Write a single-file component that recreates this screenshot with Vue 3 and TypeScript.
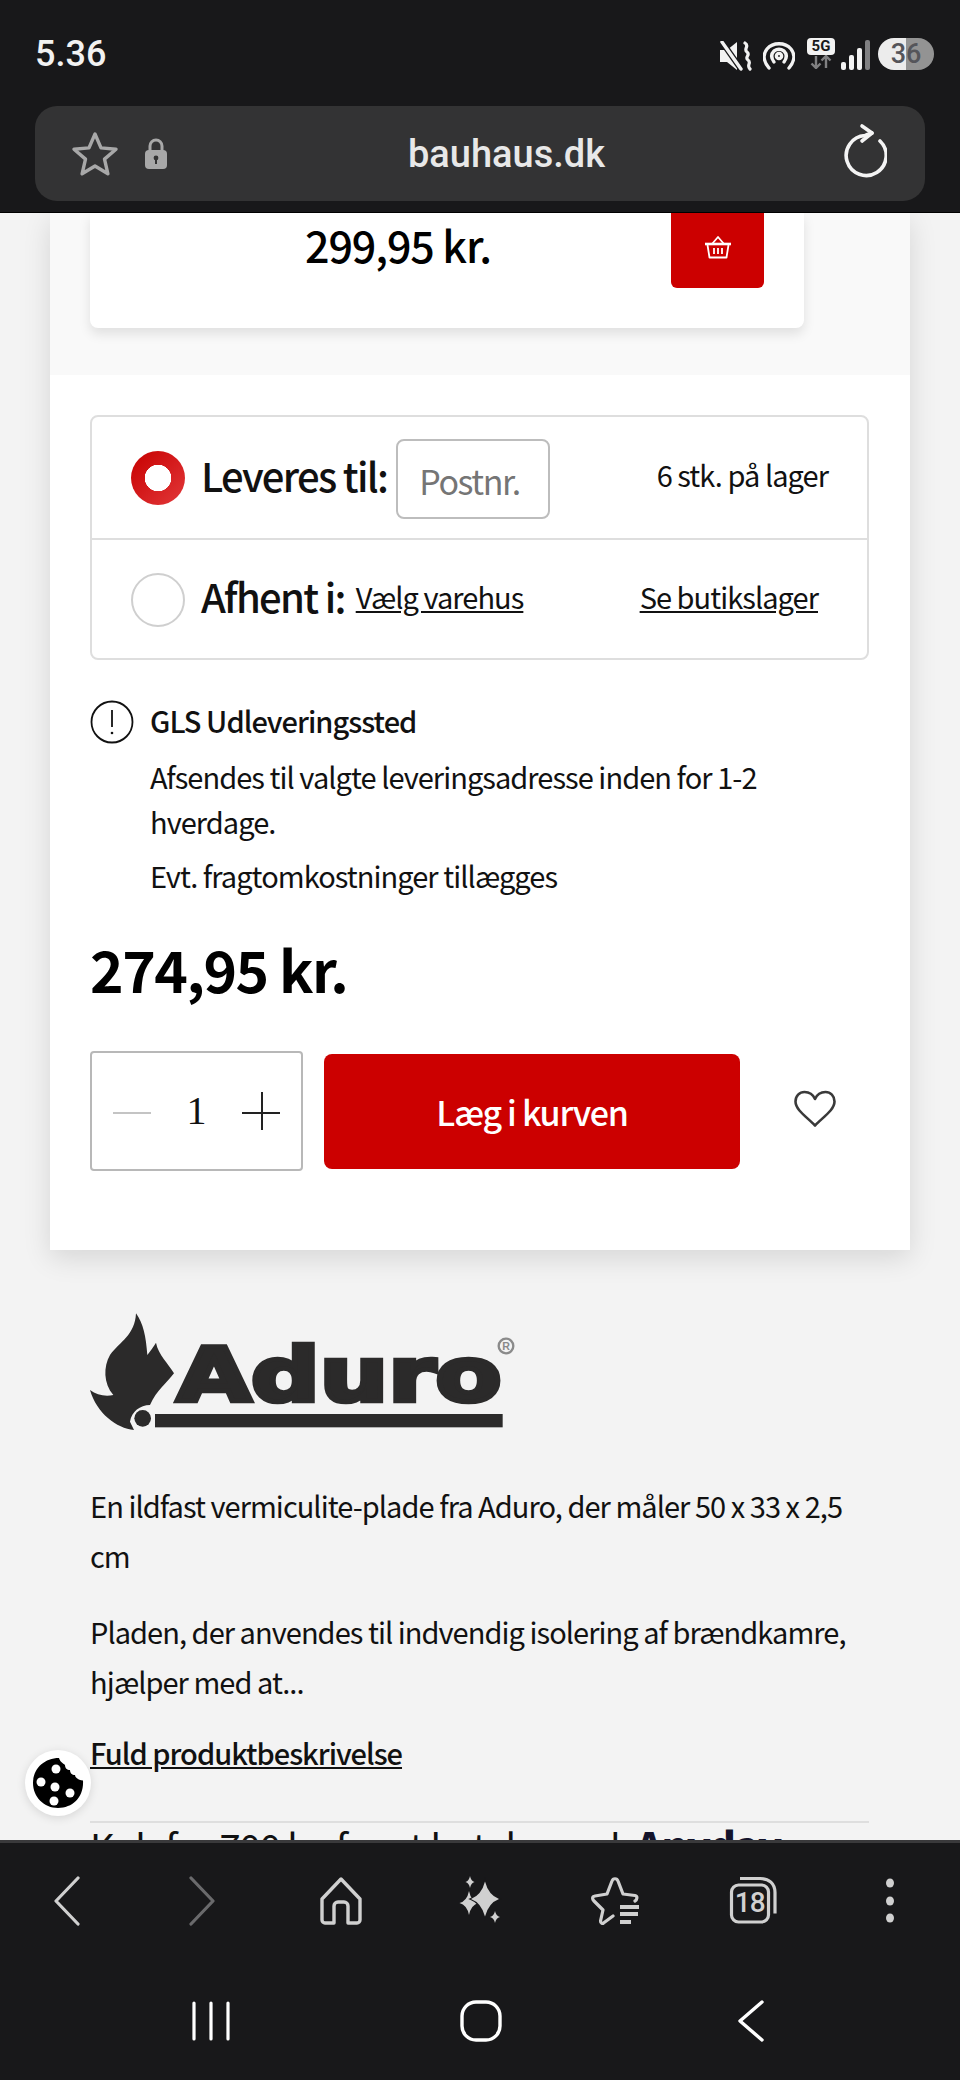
<script setup lang="ts">
const navDim = '#6a6a6c';
</script>

<template>
  <div class="phone">
    <header class="top">
      <div class="status">
        <span class="time">5.36</span>
        <div class="status-icons">
          <svg class="i-mute" width="32" height="30" viewBox="0 0 32 30">
            <path d="M0 9h7l10-8v28L7 21H0z" fill="#f2f2f2" />
            <path d="M2 1l19 27" stroke="#18181a" stroke-width="6" />
            <path d="M2 1l19 27" stroke="#f2f2f2" stroke-width="3.400" stroke-linecap="round" />
            <path d="M25 2c5 3-2 6 2 9s-3 5 1 8-2 5 2 9" fill="none" stroke="#f2f2f2" stroke-width="3.200" stroke-linecap="round" />
          </svg>
          <svg class="i-hot" width="32" height="30" viewBox="0 0 32 30" fill="none" stroke="#f2f2f2" stroke-width="3.400" stroke-linecap="round">
            <path d="M6 27C0 20 0 13 4 8c6-7 18-7 24 0 4 5 4 12-2 19" />
            <path d="M11 21c-3-4-3-8 0-11 3-2 7-2 10 0 3 3 3 7 0 11" />
            <circle cx="16" cy="15" r="2.600" />
          </svg>
          <div class="net">
            <span class="net-5g">5G</span>
            <svg width="22" height="14" viewBox="0 0 22 14" fill="none" stroke="#808082" stroke-width="2.400">
              <path d="M6 1v12M1.500 8.500 6 13l4.500-4.500" />
              <path d="M16 13V1M11.500 5.500 16 1l4.500 4.500" />
            </svg>
          </div>
          <div class="signal">
            <span class="bar b1"></span>
            <span class="bar b2"></span>
            <span class="bar b3"></span>
            <span class="bar b4"></span>
          </div>
          <div class="battery"><span>36</span></div>
        </div>
      </div>
      <div class="address">
        <svg class="addr-star" width="48" height="48" viewBox="0 0 48 48">
          <path d="M24 4l6 13.900 15 1.300-11.500 9.900 3.400 14.700L24 36l-12.900 7.800 3.400-14.700L3 19.200l15-1.300z" fill="none" stroke="#a8a8a8" stroke-width="3.400" stroke-linejoin="round" />
        </svg>
        <svg class="addr-lock" width="24" height="31" viewBox="0 0 24 31">
          <path d="M6 13V8a6 6 0 0 1 12 0v5" fill="none" stroke="#a8a8a8" stroke-width="3" />
          <rect x="1" y="12" width="22" height="19" rx="4" fill="#a8a8a8" />
          <circle cx="12" cy="20" r="2.400" fill="#333" />
          <rect x="11" y="20" width="2" height="6" fill="#333" />
        </svg>
        <span class="domain">bauhaus.dk</span>
        <svg class="addr-reload" width="46" height="56" viewBox="0 0 46 56" fill="none" stroke="#f4f4f4" stroke-width="3.600" stroke-linecap="round" stroke-linejoin="round">
          <path d="M39 18A20 20 0 1 1 24 12.500C26 11.500 28 11 31 10" />
          <path d="M21 3l10 7-10 8" />
        </svg>
      </div>
    </header>

    <main class="page">
      <section class="card">
        <div class="upsell">
          <div class="upsell-card">
            <span class="upsell-price">299,95 kr.</span>
            <button class="basket-btn">
              <svg width="28" height="23" viewBox="0 0 28 23" fill="none" stroke="#fff" stroke-width="1.800" stroke-linejoin="round">
                <path d="M8 8l6-7 6 7" />
                <path d="M1 8h26" stroke-width="2.600" />
                <path d="M3.500 9l2 12.500h17L24.500 9" />
                <path d="M10 12v6M14 12v6M18 12v6" />
              </svg>
            </button>
          </div>
        </div>

        <div class="buy">
          <div class="delivery">
            <div class="delivery-row first">
              <span class="radio on"></span>
              <span class="del-label">Leveres til:</span>
              <span class="zip">Postnr.</span>
              <span class="stock">6 stk. på lager</span>
            </div>
            <div class="delivery-row">
              <span class="radio"></span>
              <span class="del-label second">Afhent i:</span>
              <a class="pick">Vælg varehus</a>
              <a class="store">Se butikslager</a>
            </div>
          </div>

          <div class="info">
            <div class="info-head">
              <span class="info-mark">
                <svg width="44" height="44" viewBox="0 0 44 44" fill="none" stroke="#111" stroke-width="1.800">
                  <circle cx="22" cy="22" r="20.500" />
                  <path d="M22 10v17" />
                  <circle cx="22" cy="33" r="1.300" fill="#111" stroke="none" />
                </svg>
              </span>
              <strong>GLS Udleveringssted</strong>
            </div>
            <p class="info-text">Afsendes til valgte leveringsadresse inden for 1-2 hverdage.</p>
            <p class="info-text last">Evt. fragtomkostninger tillægges</p>
          </div>

          <div class="price">274,95 kr.</div>

          <div class="actions">
            <div class="qty">
              <span class="qty-minus"></span>
              <span class="qty-num">1</span>
              <span class="qty-plus"></span>
            </div>
            <button class="add">Læg i kurven</button>
            <svg class="heart" width="44" height="38" viewBox="0 0 44 38">
              <path d="M22 35.500C14 27 2.500 20 2.500 11.500 2.500 6 6.500 2 11.500 2c4.500 0 8.500 2.500 10.500 7 2-4.500 6-7 10.500-7 5 0 9 4 9 9.500C41.500 20 30 27 22 35.500z" fill="none" stroke="#3a3a3a" stroke-width="2.600" stroke-linejoin="round" />
            </svg>
          </div>
        </div>
      </section>

      <section class="desc">
        <svg class="logo" width="430" height="124" viewBox="90 90 1290 372">
          <path d="M228 100C250 130 258 170 262 225 270 215 280 200 288 188 295 225 325 250 342 280 320 310 290 330 270 375 240 375 215 395 210 425L222 450C170 445 110 400 90 330 110 345 135 350 160 345 130 310 130 260 150 225 180 185 225 165 228 100Z" fill="#2b2a2a" />
          <circle cx="248" cy="415" r="25" fill="#2b2a2a" />
          <rect x="285" y="402" width="1043" height="40" fill="#2b2a2a" />
          <text x="350" y="364" class="logo-word" textLength="975" lengthAdjust="spacingAndGlyphs">Aduro</text>
          <circle cx="1338" cy="198" r="22" fill="none" stroke="#8a8a8a" stroke-width="7" />
          <text x="1338" y="210" class="logo-r" text-anchor="middle">R</text>
        </svg>
        <p class="desc-text">En ildfast vermiculite-plade fra Aduro, der måler 50 x 33 x 2,5 cm</p>
        <p class="desc-text">Pladen, der anvendes til indvendig isolering af brændkamre, hjælper med at...</p>
        <a class="full">Fuld produktbeskrivelse</a>
        <div class="anyday">
          <span>Køb for 700 kr. for at betale med</span>
          <b>Anyday</b>
        </div>
      </section>

      <button class="cookie">
        <svg width="52" height="52" viewBox="0 0 52 52">
          <path d="M27 1C28 5 31 6 33 8c0 3 2 5 5 5 0 3 2 5 5 5 0 3 4 5 8 5.500C52 40 41 51 26 51 12 51 1 40 1 26S12 1 27 1z" fill="#000" />
          <g fill="#fff">
            <ellipse cx="24" cy="12" rx="4.500" ry="4.500" />
            <ellipse cx="9" cy="25" rx="4.500" ry="4.500" />
            <ellipse cx="23" cy="30" rx="4.500" ry="4.500" />
            <ellipse cx="38" cy="36" rx="4.500" ry="4.500" />
            <ellipse cx="22" cy="44" rx="4.500" ry="4.500" />
          </g>
        </svg>
      </button>
    </main>

    <footer class="bottom">
      <nav class="browser-nav">
        <svg width="48" height="50" viewBox="0 0 48 50" fill="none" stroke="#d0d0d0" stroke-width="3.200" stroke-linecap="round" stroke-linejoin="round">
          <path d="M36 2L14 25l22 23" />
        </svg>
        <svg width="48" height="50" viewBox="0 0 48 50" fill="none" :stroke="navDim" stroke-width="3.200" stroke-linecap="round" stroke-linejoin="round">
          <path d="M12 2l22 23-22 23" />
        </svg>
        <svg width="48" height="50" viewBox="0 0 48 50" fill="none" stroke="#d0d0d0" stroke-width="3.400" stroke-linejoin="round">
          <path d="M24 3L5 23v21a3 3 0 0 0 3 3h9V30a4 4 0 0 1 4-4h6a4 4 0 0 1 4 4v17h9a3 3 0 0 0 3-3V23z" />
        </svg>
        <svg width="48" height="50" viewBox="0 0 48 50" fill="#d0d0d0">
          <path d="M15 15Q17 25 24.500 27 17 29 15 39 13 29 5.500 27 13 25 15 15Z" />
          <path d="M31 5.500Q34.500 19 45 23 34.500 27 31 40.500 27.500 27 17 23 27.500 19 31 5.500Z" stroke="#18181a" stroke-width="2" paint-order="stroke" />
          <path d="M16 0Q17 5 20.500 6 17 7 16 12 15 7 11.500 6 15 5 16 0ZM41 35Q42 40 46 41 42 42 41 47 40 42 36 41 40 40 41 35Z" />
        </svg>
        <svg width="48" height="50" viewBox="0 0 48 50" fill="none" stroke="#d0d0d0" stroke-width="3.200" stroke-linejoin="round" stroke-linecap="round">
          <path d="M44 25c2-1 3-5 0-5.500L32 18 27 5c-1-3-5-3-6 0l-5 13-12 2c-3 .5-3 3-1 5l9 9-2.500 11c0 2 2 3 3 2L22 40" />
          <path d="M29 31h20M29 38h18M29 46h11" stroke-width="4" stroke-linecap="butt" />
        </svg>
        <div class="tabs">
          <svg width="48" height="50" viewBox="0 0 48 50" fill="none" stroke="#d0d0d0" stroke-width="3.200">
            <rect x="2.500" y="9" width="37" height="37" rx="7" />
            <path d="M11 2.500h20c9 0 15 5 15 14v21" />
          </svg>
          <span>18</span>
        </div>
        <svg width="48" height="50" viewBox="0 0 48 50" fill="#d0d0d0">
          <ellipse cx="24" cy="7" rx="4" ry="4.500" />
          <ellipse cx="24" cy="25" rx="4" ry="4.500" />
          <ellipse cx="24" cy="42" rx="4" ry="4.500" />
        </svg>
      </nav>
      <nav class="system-nav">
        <svg width="48" height="40" viewBox="0 0 48 40" fill="none" stroke="#fff" stroke-width="3.200" stroke-linecap="round">
          <path d="M7 2v36M24 2v36M41 2v36" />
        </svg>
        <svg width="48" height="42" viewBox="0 0 48 42" fill="none" stroke="#fff" stroke-width="3.400">
          <rect x="5" y="2" width="38" height="38" rx="14" />
        </svg>
        <svg width="48" height="42" viewBox="0 0 48 42" fill="none" stroke="#fff" stroke-width="3.400" stroke-linecap="round" stroke-linejoin="round">
          <path d="M36 2L14 21l22 19" />
        </svg>
      </nav>
    </footer>
  </div>
</template>

<style scoped>
.phone {
  width: 960px;
  height: 2080px;
  display: flex;
  flex-direction: column;
  overflow: hidden;
  position: relative;
  font-family: "Noto Sans CJK SC", "Noto Sans", sans-serif;
  color: #111;
}

.top {
  height: 213px;
  flex: none;
  background: #18181a;
  border-bottom: 1px solid #000;
  box-sizing: border-box;
  padding: 0 35px;
  font-family: Roboto, "Liberation Sans", sans-serif;
}

.status {
  height: 106px;
  display: flex;
  justify-content: space-between;
  align-items: flex-start;
}

.time {
  margin-top: 33px;
  font-size: 36px;
  line-height: 42px;
  font-weight: 500;
  color: #f2f2f2;
}

.status-icons {
  display: flex;
  align-items: flex-start;
  margin-top: 38px;
  margin-right: -9px;
}

.i-mute {
  margin-top: 3px;
  margin-right: 11px;
}

.i-hot {
  margin-top: 3px;
  margin-right: 12px;
}

.net {
  width: 28px;
  display: flex;
  flex-direction: column;
  align-items: center;
  margin-right: 6px;
}

.net-5g {
  width: 28px;
  height: 17px;
  background: #f2f2f2;
  color: #18181a;
  border-radius: 4px;
  font-size: 15px;
  line-height: 17px;
  font-weight: 700;
  text-align: center;
}

.signal {
  display: flex;
  align-items: flex-end;
  gap: 3px;
  height: 30px;
  margin-top: 2px;
  margin-right: 8px;
}

.bar {
  width: 5px;
  border-radius: 2px;
  background: #f2f2f2;
}

.b1 { height: 8px; }
.b2 { height: 15px; }
.b3 { height: 22px; }
.b4 { height: 30px; background: #808082; }

.battery {
  width: 56px;
  height: 32px;
  border-radius: 16px;
  background: linear-gradient(90deg, #ececec 0 50%, #939393 50% 100%);
  color: #55555a;
  font-size: 27px;
  font-weight: 500;
  line-height: 32px;
  text-align: center;
}

.address {
  height: 95px;
  background: #333334;
  border-radius: 22px;
  display: flex;
  align-items: center;
  position: relative;
  padding-left: 36px;
}

.addr-star {
  margin-right: 25px;
}

.domain {
  position: absolute;
  left: 373px;
  top: 25px;
  font-size: 38px;
  line-height: 46px;
  font-weight: 500;
  color: #e8e8e8;
}

.addr-reload {
  margin-left: auto;
  margin-right: 38px;
  margin-top: -5px;
}

.page {
  flex: 1;
  min-height: 0;
  overflow: hidden;
  position: relative;
  background: #f3f3f3;
}

.card {
  margin: 0 50px;
  background: #fff;
  box-shadow: 0 8px 26px rgba(0, 0, 0, 0.12);
}

.upsell {
  height: 162px;
  background: #f9f9f9;
  padding: 0 40px;
}

.upsell-card {
  width: 714px;
  height: 115px;
  background: #fff;
  border-radius: 0 0 8px 8px;
  box-shadow: 0 6px 12px rgba(0, 0, 0, 0.1);
  position: relative;
  display: flex;
  justify-content: space-between;
}

.upsell-price {
  margin: 6px 0 0 215px;
  font-size: 43px;
  line-height: 50px;
  font-weight: 500;
  letter-spacing: -1.1px;
  color: #000;
}

.basket-btn {
  width: 93px;
  height: 75px;
  margin-right: 40px;
  border: 0;
  padding: 0 0 6px;
  background: #cc0000;
  border-radius: 0 0 6px 6px;
  display: flex;
  align-items: center;
  justify-content: center;
}

.buy {
  padding: 40px 40px 0;
  height: 875px;
  box-sizing: border-box;
}

.delivery {
  width: 779px;
  height: 245px;
  box-sizing: border-box;
  border: 2px solid #dedede;
  border-radius: 8px;
}

.delivery-row {
  height: 120px;
  display: flex;
  align-items: center;
  padding-left: 39px;
  position: relative;
}

.delivery-row.first {
  border-bottom: 2px solid #dedede;
  height: 121px;
}

.radio {
  width: 54px;
  height: 54px;
  box-sizing: border-box;
  border-radius: 50%;
  border: 2px solid #cfcfcf;
  margin-right: 16px;
  flex: none;
}

.radio.on {
  border: 0;
  background:
    radial-gradient(circle, #fff 0 13px, transparent 13.5px),
    linear-gradient(135deg, #c70000, #e2383a);
}

.del-label {
  font-size: 40px;
  line-height: 50px;
  font-weight: 500;
  letter-spacing: -1.7px;
  margin-top: -6px;
  color: #111;
  white-space: nowrap;
}

.del-label.second {
  margin-top: -8px;
}

.zip {
  width: 154px;
  height: 80px;
  box-sizing: border-box;
  margin-left: 9px;
  margin-top: 3px;
  border: 2px solid #bdbdbd;
  border-radius: 8px;
  padding: 18px 0 0 21px;
  font-size: 34px;
  line-height: 44px;
  letter-spacing: -1.4px;
  color: #757575;
}

.stock {
  position: absolute;
  right: 39px;
  top: 37px;
  font-size: 29px;
  line-height: 40px;
  letter-spacing: -0.95px;
}

.pick {
  margin-left: 11px;
  margin-top: -8px;
  font-size: 29px;
  line-height: 40px;
  letter-spacing: -0.95px;
  text-decoration: underline;
}

.store {
  position: absolute;
  right: 49px;
  top: 36px;
  font-size: 29px;
  line-height: 40px;
  letter-spacing: -0.95px;
  text-decoration: underline;
}

.info {
  margin-top: 40px;
  font-size: 29px;
  line-height: 45px;
  letter-spacing: -0.95px;
}

.info-head {
  display: flex;
  align-items: center;
  height: 44px;
}

.info-head strong {
  font-weight: 500;
  margin-top: -4px;
}

.info-mark {
  width: 60px;
  height: 44px;
  flex: none;
}

.info-text {
  margin: 10px 0 0 60px;
  width: 660px;
}

.info-text.last {
  margin-top: 9px;
}

.price {
  margin-top: 35px;
  font-size: 57px;
  line-height: 70px;
  font-weight: 700;
  letter-spacing: -1.5px;
  color: #000;
}

.actions {
  margin-top: 48px;
  display: flex;
  align-items: center;
}

.qty {
  width: 213px;
  height: 120px;
  box-sizing: border-box;
  border: 2px solid #b8b8b8;
  border-radius: 4px;
  display: flex;
  align-items: center;
  justify-content: space-between;
  padding: 0 21px;
  margin-right: 21px;
}

.qty-minus,
.qty-plus {
  width: 38px;
  height: 38px;
  position: relative;
}

.qty-minus::before,
.qty-plus::before {
  content: "";
  position: absolute;
  left: 0;
  right: 0;
  top: 20px;
  height: 2px;
  background: #c4c4c4;
}

.qty-plus::before {
  background: #222;
}

.qty-plus::after {
  content: "";
  position: absolute;
  left: 19px;
  top: 0;
  width: 2px;
  height: 38px;
  background: #222;
}

.qty-num {
  font-family: "Liberation Serif", serif;
  font-size: 40px;
  line-height: 44px;
  color: #111;
}

.add {
  width: 416px;
  height: 115px;
  border: 0;
  padding: 0;
  background: #cc0000;
  border-radius: 8px;
  color: #fff;
  font-family: inherit;
  font-size: 34px;
  font-weight: 500;
  letter-spacing: -1.3px;
}

.heart {
  margin-left: 53px;
  margin-top: -4px;
}

.desc {
  padding: 60px 91px 0 90px;
}

.logo {
  display: block;
  margin-bottom: 46px;
}

.logo-word {
  font-family: "DejaVu Sans", sans-serif;
  font-weight: 700;
  font-size: 222px;
  fill: #2b2a2a;
  stroke: #2b2a2a;
  stroke-width: 14px;
}

.logo-r {
  font-family: "Liberation Sans", sans-serif;
  font-size: 32px;
  font-weight: 700;
  fill: #8a8a8a;
}

.desc-text {
  margin: 0 0 26px;
  font-size: 29px;
  line-height: 50px;
  letter-spacing: -0.95px;
}

.full {
  display: block;
  margin-top: 24px;
  font-size: 29px;
  line-height: 40px;
  font-weight: 500;
  letter-spacing: -1px;
  text-decoration: underline;
}

.anyday {
  margin-top: 49px;
  padding-top: 0;
  border-top: 2px solid #dedede;
  display: flex;
  align-items: baseline;
  font-size: 38px;
  line-height: 44px;
  letter-spacing: -1px;
  white-space: nowrap;
}

.anyday span {
  width: 546px;
  flex: none;
}

.anyday b {
  font-size: 40px;
  font-weight: 900;
  color: #14142b;
}

.cookie {
  position: absolute;
  left: 25px;
  top: 1537px;
  width: 66px;
  height: 66px;
  padding: 0;
  border: 0;
  border-radius: 50%;
  background: #fff;
  box-shadow: 0 2px 10px rgba(0, 0, 0, 0.12);
  display: flex;
  align-items: center;
  justify-content: center;
}

.bottom {
  height: 240px;
  flex: none;
  background: #18181a;
  border-top: 3px solid #39393b;
  box-sizing: border-box;
}

.browser-nav {
  display: flex;
  justify-content: space-between;
  padding: 33px 46px 0 42px;
}

.tabs {
  width: 48px;
  height: 50px;
  position: relative;
}

.tabs span {
  position: absolute;
  left: 2px;
  width: 38px;
  top: 11px;
  text-align: center;
  font-family: Roboto, sans-serif;
  font-size: 28px;
  font-weight: 500;
  line-height: 32px;
  letter-spacing: -1px;
  color: #d0d0d0;
}

.system-nav {
  display: flex;
  justify-content: space-between;
  align-items: center;
  padding: 74px 186px 0 187px;
}
</style>

<style>
body {
  margin: 0;
  background: #18181a;
}
</style>
